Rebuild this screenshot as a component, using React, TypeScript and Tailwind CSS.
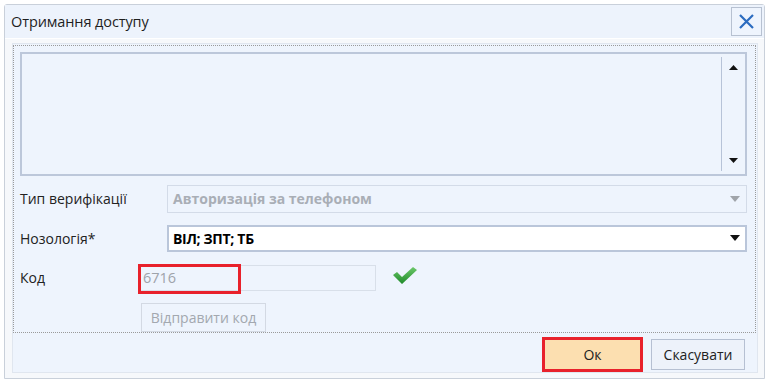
import React from "react";

const font = { fontFamily: '"Open Sans", "Noto Sans", sans-serif' };

const Arrow = ({ color }: { color: string }) => (
    <svg width="10" height="6" viewBox="0 0 10 6">
        <path d="M0 0 L10 0 L5 6 Z" fill={color}/>
    </svg>
);

const Check = () => (
    <svg width="26" height="19" viewBox="0 0 26 19">
        <defs>
            <linearGradient id="chk" x1="0" y1="0" x2="0" y2="1">
                <stop offset="0" stopColor="#6cc86a"/>
                <stop offset="1" stopColor="#1f8a2a"/>
            </linearGradient>
        </defs>
        <path d="M1 9 L5 6 L10 11 L21 1 L25 4 L10 18 Z" fill="url(#chk)"/>
    </svg>
);

export default function App() {
    return (
        <div className="w-[767px] h-[381px] bg-white pt-[4px] pl-[4px] overflow-hidden" style={font}>
            <div className="w-[761px] h-[375px] border border-[#c9d0da] rounded-t-[3px] flex flex-col">
                {/* title */}
                <div className="h-[33px] bg-[#edf3fc] flex items-center justify-between pl-[6px] pr-[2px]">
                    <span className="text-[14.5px] text-[#1e1e1e] tracking-[-0.1px]">Отримання доступу</span>
                    <button className="w-[31px] h-[29px] border border-[#b7c1d1] bg-[#eef4fd] flex items-center justify-center">
                        <svg width="17" height="17" viewBox="0 0 17 17">
                            <path d="M2 2 L15 15 M15 2 L2 15" stroke="#2b6cc0" strokeWidth="2.2"/>
                        </svg>
                    </button>
                </div>

                {/* frame */}
                <div className="flex-1 bg-[#f6f8fb] border-t border-[#ffffff] pt-[4px] pl-[7px] pr-[6px] pb-[5px] flex">
                    <div className="flex-1 bg-[#eef4fd] border border-[#e0e6ef] pt-[1px] pl-0 pr-[1px] flex flex-col">
                        <div className="h-[288px] border border-dotted border-[#9a9a9a] pt-[6px] pl-[6px] pr-[8px] flex flex-col">
                            {/* memo */}
                            <div className="h-[125px] border-2 border-[#bcc7da] flex">
                                <div className="flex-1"/>
                                <div className="w-[24px] border-l border-[#b7c3d8] my-[3px] flex flex-col items-center justify-between py-[8px]">
                                    <svg width="9" height="5" viewBox="0 0 9 5"><path d="M0 5 L9 5 L4.5 0 Z" fill="#111"/></svg>
                                    <svg width="9" height="5" viewBox="0 0 9 5"><path d="M0 0 L9 0 L4.5 5 Z" fill="#111"/></svg>
                                </div>
                            </div>

                            <div className="mt-[9px] h-[28px] flex items-center">
                                <span className="w-[147px] text-[14px] text-[#222]">Тип верифікації</span>
                                <div className="flex-1 h-full border border-[#d3dbe8] bg-[#eef4fd] flex items-center justify-between pl-[5px] pr-[6px]">
                                    <span className="text-[14px] font-bold text-[#a9aeb6]">Авторизація за телефоном</span>
                                    <Arrow color="#a0a4aa"/>
                                </div>
                            </div>

                            <div className="mt-[12px] h-[28px] flex items-center">
                                <span className="w-[147px] text-[14px] text-[#222]">Нозологія*</span>
                                <div className="flex-1 h-full border-2 border-[#bac6da] bg-white flex items-center justify-between pl-[4px] pr-[5px]">
                                    <span className="text-[14px] font-bold text-black tracking-[-0.3px]">ВІЛ; ЗПТ; ТБ</span>
                                    <Arrow color="#111"/>
                                </div>
                            </div>

                            <div className="mt-[12px] h-[27px] flex items-center">
                                <span className="w-[119px] text-[14px] text-[#222]">Код</span>
                                <div className="relative w-[237px] h-[26px] border border-[#d8dfe9] bg-[#eef4fd] flex items-center pl-[3px]">
                                    <span className="text-[14.5px] text-[#9ea3aa]">6716</span>
                                    <div className="absolute left-[-2px] top-[-2px] w-[103px] h-[30px] border-[3px] border-[#e8212b]"/>
                                </div>
                                <div className="ml-[16px] mt-[-4px]"><Check/></div>
                            </div>

                            <div className="mt-[12px] pl-[121px]">
                                <button className="w-[125px] h-[29px] border border-[#d3d9e3] bg-[#eef4fd] text-[14px] text-[#a3a8af]">
                                    Відправити код
                                </button>
                            </div>
                        </div>

                        <div className="flex-1 flex items-center justify-end pr-[11px] gap-[8px] pt-[3px]">
                            <button className="w-[101px] h-[35px] border-[3px] border-[#e8212b] bg-[#fcdfb0] text-[14px] text-[#222]">
                                Ок
                            </button>
                            <button className="w-[94px] h-[31px] border border-[#b6c0d2] bg-[#edf2fa] text-[14px] text-[#222]">
                                Скасувати
                            </button>
                        </div>
                    </div>
                </div>
            </div>
        </div>
    );
}
